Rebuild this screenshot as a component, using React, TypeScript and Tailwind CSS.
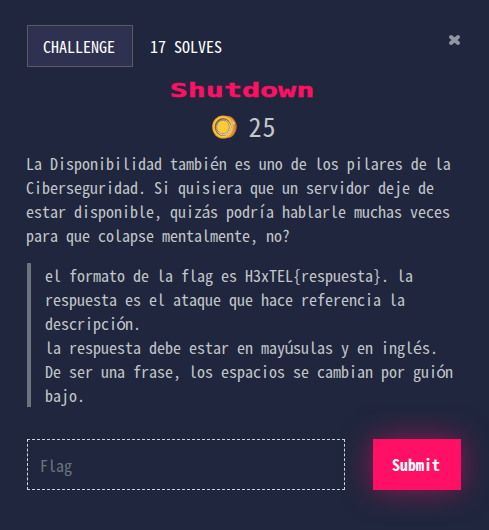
import React from "react";

const description = [
  "La Disponibilidad también es uno de los pilares de la",
  "Ciberseguridad. Si quisiera que un servidor deje de",
  "estar disponible, quizás podría hablarle muchas veces",
  "para que colapse mentalmente, no?",
];

const hints = [
  "el formato de la flag es H3xTEL{respuesta}. la",
  "respuesta es el ataque que hace referencia la",
  "descripción.",
  "la respuesta debe estar en mayúsulas y en inglés.",
  "De ser una frase, los espacios se cambian por guión",
  "bajo.",
];

// Keeps accented letters on the same 8px column grid as the other characters.
function MonoLine({ text }: { text: string }) {
  return (
    <p className="h-6">
      {text.split(/([áíóú])/).map((part, i) =>
        i % 2 === 1 ? (
          <span key={i} className="inline-flex w-2 justify-center">{part}</span>
        ) : (
          part
        ),
      )}
    </p>
  );
}

function Coin() {
  return (
    <svg width="25" height="24" viewBox="0 0 25 24" aria-hidden="true">
      <ellipse cx="14.3" cy="12" rx="10.5" ry="11.3" fill="#b06f38" />
      <path d="M16 2c4.5 1.500 6.500 5.500 6.500 10s-2 8-5.500 9.500" fill="none" stroke="#d78c3c" strokeWidth="2" />
      <path d="M18 3l5 5.500-2 1.500-4-5.500z" fill="#f3dccb" />
      <ellipse cx="11" cy="12" rx="10.800" ry="11.500" fill="#f2a32b" />
      <ellipse cx="11" cy="12" rx="9.800" ry="10.500" fill="#fcc63d" />
      <ellipse cx="11" cy="12" rx="8.300" ry="8.900" fill="#75664c" />
      <ellipse cx="11.600" cy="12.600" rx="7.500" ry="8" fill="#dacbb0" />
      <ellipse cx="11" cy="12" rx="6.600" ry="7.200" fill="#9a7c3f" />
      <ellipse cx="11" cy="12" rx="5.900" ry="6.600" fill="#ffc83d" />
    </svg>
  );
}

export default function App() {
  return (
    <main className="h-[530px] w-[489px] overflow-hidden bg-[#1f263e] pl-[27px] pr-7 pt-[25px] font-['Noto_Sans_Mono_CJK_SC','DejaVu_Sans_Mono',monospace] text-base leading-6 text-[#c2c5c9]">
      <header className="flex h-[42px] items-start">
        <button className="h-[42px] w-[106px] border border-[#5b5b5e] bg-[#2e3150] pr-[2px] text-white">CHALLENGE</button>
        <span className="ml-[17px] mt-[9px] text-white">17 SOLVES</span>
        <button aria-label="Close" className="ml-auto mt-[9px]">
          <svg width="14" height="12" viewBox="0 0 14 12">
            <path d="M4 3L11 9M11 3L4 9" stroke="#9296a3" strokeWidth="4" strokeLinecap="round" />
          </svg>
        </button>
      </header>
      <h1 className="mr-1 mt-[11px] flex h-6 scale-x-150 items-center justify-center font-['DejaVu_Sans_Mono',monospace] text-[20px] font-bold leading-6 text-[#ff1065] [-webkit-text-stroke:0.4px_#ff1065]">Shutdown</h1>
      <div className="mt-[13px] flex h-6 items-center justify-center gap-[11px] pl-px">
        <Coin />
        <span className="mt-[-2px] text-[26px] font-light leading-6 tracking-[1px]">25</span>
      </div>
      <div className="-ml-px mt-3 whitespace-pre">
        {description.map((line) => <MonoLine key={line} text={line} />)}
      </div>
      <blockquote className="mt-4 h-36 whitespace-pre border-l-4 border-[#6c757d] pl-[14px]">
        {hints.map((line) => <MonoLine key={line} text={line} />)}
      </blockquote>
      <form className="mt-8 flex justify-between" onSubmit={(e) => e.preventDefault()}>
        <input
          placeholder="Flag"
          className="h-[51px] w-[318px] border border-dashed border-[#ced4da] bg-transparent px-3 outline-none placeholder:text-[#6c757d]"
        />
        <button className="h-[51px] w-[88px] bg-[#ff1065] pb-[2px] pr-[2px] font-bold text-white shadow-[0_0_30px_rgba(255,16,101,0.5)]">Submit</button>
      </form>
    </main>
  );
}
